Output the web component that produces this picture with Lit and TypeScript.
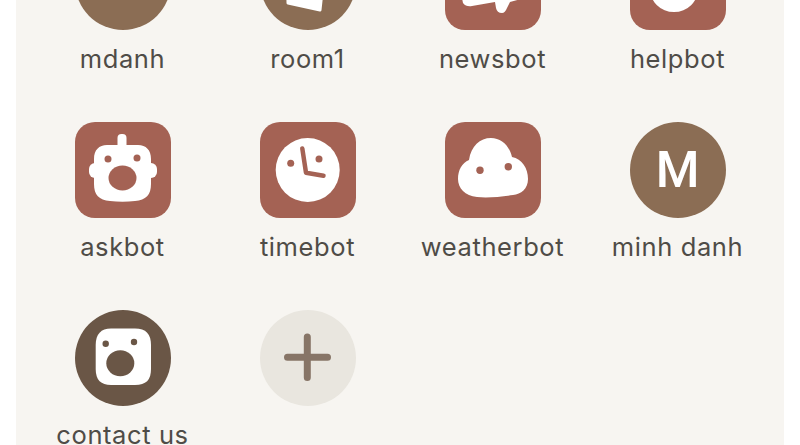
import { LitElement, css, html, svg } from 'lit'
import { customElement } from 'lit/decorators.js'

type Shape = 'round' | 'square' | 'dark' | 'add'

interface Tile {
  label: string
  shape: Shape
  glyph?: string
  art?: unknown
}

const robot = svg`
  <rect x="42.5" y="12" width="9" height="16" rx="4" fill="#fff" />
  <rect x="14" y="41" width="68" height="15" rx="6" fill="#fff" />
  <path d="M32 23H63C71 23 76 28 76 37V62C76 73 71 78 60 79C52 80 43 80 35 79C24 78 19 73 19 62V37C19 28 24 23 32 23Z" fill="#fff" />
  <circle cx="33" cy="37" r="3.5" fill="#a46254" />
  <circle cx="62" cy="36" r="3.5" fill="#a46254" />
  <ellipse cx="47.5" cy="56" rx="14" ry="12.5" fill="#a46254" />
`

const clock = svg`
  <circle cx="47.7" cy="48" r="32" fill="#fff" />
  <circle cx="30.7" cy="41.3" r="3.5" fill="#a46254" />
  <circle cx="59" cy="37" r="3.5" fill="#a46254" />
  <path d="M42.3 26.5L46 50.7L63.5 53.7" fill="none" stroke="#a46254" stroke-width="4.5" stroke-linecap="round" stroke-linejoin="round" />
`

const cloud = svg`
  <path d="M24 38C26 24 35 16 46 16C56 16 64 23 67 35C77 37 83 46 83 57C83 67 76 72 68 73C55 75 42 76 32 75C20 74 13 66 13 57C13 48 17 41 24 38Z" fill="#fff" />
  <circle cx="35" cy="48.3" r="3.7" fill="#a46254" />
  <circle cx="63.3" cy="44.7" r="3.7" fill="#a46254" />
`

const megaphone = svg`
  <path d="M14 50L18 69Q21 73 27 72L50 68L51 74Q52 79 57 79Q60 79 62 74L65 68L76 65V40H14Z" fill="#fff" />
`

const help = svg`<circle cx="44" cy="53.6" r="24.5" fill="#fff" />`

const door = svg`
  <path d="M27 30H65L60 76L28 69Z" fill="#fff" stroke="#fff" stroke-width="3" stroke-linejoin="round" />
`

const camera = svg`
  <path d="M36 18.5H60C71 18.5 76 24 76 35V59C76 70 71 75 60 75H36C26 75 20.7 70 20.7 59V35C20.7 24 26 18.5 36 18.5Z" fill="#fff" />
  <circle cx="30.7" cy="33.7" r="3.2" fill="#6a5646" />
  <circle cx="59" cy="32" r="3.2" fill="#6a5646" />
  <ellipse cx="45.3" cy="53.3" rx="14" ry="13" fill="#6a5646" />
`

const plus = svg`
  <path d="M27.5 47.3H67.5M47.3 27V67.5" fill="none" stroke="#877567" stroke-width="7" stroke-linecap="round" />
`

const TILES: Tile[] = [
  { label: 'mdanh', shape: 'round', glyph: 'M' },
  { label: 'room1', shape: 'round', art: door },
  { label: 'newsbot', shape: 'square', art: megaphone },
  { label: 'helpbot', shape: 'square', art: help },
  { label: 'askbot', shape: 'square', art: robot },
  { label: 'timebot', shape: 'square', art: clock },
  { label: 'weatherbot', shape: 'square', art: cloud },
  { label: 'minh danh', shape: 'round', glyph: 'M' },
  { label: 'contact us', shape: 'dark', art: camera },
  { label: '', shape: 'add', art: plus },
]

@customElement('app-root')
export class AppRoot extends LitElement {
  static styles = css`
    :host {
      display: block;
      height: 445px;
      overflow: hidden;
      background: #fff;
      font-family: Inter, 'Noto Sans', sans-serif;
    }

    .panel {
      margin: -66px 16px 0;
      padding-bottom: 40px;
      background: #f7f5f1;
      display: grid;
      grid-template-columns: repeat(4, 185px);
      grid-auto-rows: 188px;
      justify-content: center;
    }

    .tile {
      display: flex;
      flex-direction: column;
      align-items: center;
    }

    .icon {
      width: 96px;
      height: 96px;
      flex: none;
      display: flex;
      align-items: center;
      justify-content: center;
    }

    .icon svg {
      display: block;
    }

    .round {
      border-radius: 50%;
      background: #8b6d54;
    }

    .square {
      border-radius: 20px;
      background: #a46254;
    }

    .dark {
      border-radius: 50%;
      background: #6a5646;
    }

    .add {
      border-radius: 50%;
      background: #e9e6df;
    }

    .glyph {
      color: #fff;
      font-family: Roboto, sans-serif;
      font-weight: 500;
      font-size: 50px;
      line-height: 1;
    }

    .label {
      margin-top: 12px;
      color: #4f4c47;
      font-size: 25.5px;
      letter-spacing: 0.6px;
      line-height: 34px;
      white-space: nowrap;
    }
  `

  render() {
    return html`
      <div class="panel">
        ${TILES.map(
          (t) => html`
            <div class="tile">
              <div class="icon ${t.shape}">
                ${t.glyph
                  ? html`<span class="glyph">${t.glyph}</span>`
                  : html`<svg width="96" height="96" viewBox="0 0 96 96">${t.art}</svg>`}
              </div>
              ${t.label ? html`<div class="label">${t.label}</div>` : ''}
            </div>
          `,
        )}
      </div>
    `
  }
}
